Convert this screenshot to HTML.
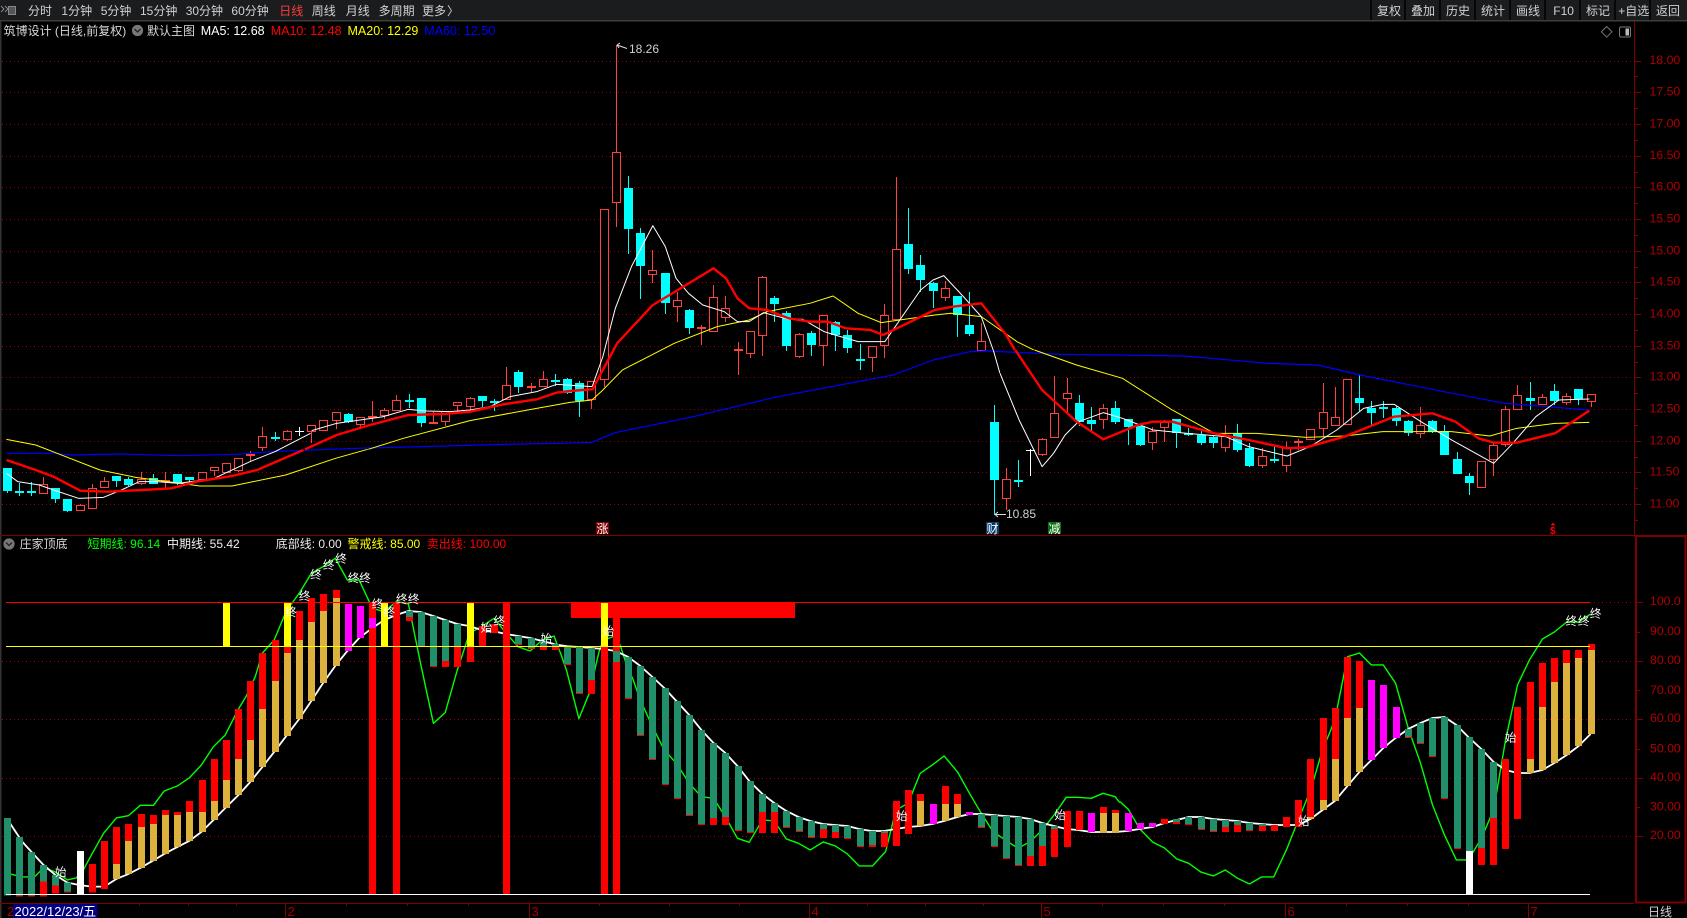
<!DOCTYPE html>
<html lang="zh"><head><meta charset="utf-8"><title>筑博设计</title>
<style>
html,body{margin:0;padding:0;background:#000;width:1687px;height:918px;overflow:hidden}
svg{display:block}
text{font-family:"Liberation Sans","Noto Sans CJK SC",sans-serif;font-size:12px;white-space:pre}
polyline{fill:none;vector-effect:non-scaling-stroke;stroke-linejoin:round}
.m text{fill:#ced2d6}
.ax text{fill:#b00000;font-size:12.3px}
.sg text{fill:#fff;text-anchor:middle;font-size:11.5px}
</style></head><body>
<svg width="1687" height="918" viewBox="0 0 1687 918" xmlns="http://www.w3.org/2000/svg">
<rect width="1687" height="918" fill="#000"/>
<!-- top bar -->
<rect width="1687" height="20" fill="#1b1c1e"/>
<rect y="20" width="1687" height="1.5" fill="#3c3c3c"/>
<rect x="0" y="21" width="1.5" height="897" fill="#333"/>
<path d="M1 6l3 3-3 3M5 6l3 3-3 3" fill="none" stroke="#888"/>
<rect x="8.5" y="6.5" width="7" height="8" fill="#555" stroke="#888"/>
<g class="m">
<text x="28" y="15">分时</text><text x="61.4" y="15">1分钟</text><text x="100.7" y="15">5分钟</text><text x="140" y="15">15分钟</text><text x="185.7" y="15">30分钟</text><text x="231.4" y="15">60分钟</text><text x="279.3" y="15" style="fill:#ff3c3c">日线</text><text x="311.8" y="15">周线</text><text x="345.7" y="15">月线</text><text x="378.6" y="15">多周期</text><text x="422" y="15">更多</text><text x="447" y="15">〉</text>
</g>
<!-- right buttons -->
<path d="M1371 0v20M1405 0v20M1440 0v20M1475 0v20M1510 0v20M1545 0v20M1580 0v20M1615 0v20M1650 0v20" stroke="#000" stroke-width="1.5"/>
<g class="m"><text x="1377" y="15">复权</text><text x="1411" y="15">叠加</text><text x="1446" y="15">历史</text><text x="1481" y="15">统计</text><text x="1516" y="15">画线</text><text x="1553.3" y="15">F10</text><text x="1586" y="15">标记</text><text x="1618.3" y="15">+自选</text><text x="1656" y="15">返回</text></g>
<!-- info row -->
<text x="3.6" y="35" fill="#d8d8d8">筑博设计 (日线,前复权)</text>
<circle cx="137.5" cy="30.5" r="5.6" fill="#777"/><path d="M134.5 29l3 3 3-3" fill="none" stroke="#222" stroke-width="1.3"/>
<text x="147" y="35" fill="#d8d8d8">默认主图</text>
<text x="200.7" y="35" fill="#fff" style="font-size:12.5px">MA5: 12.68</text>
<text x="270.7" y="35" fill="#f00" style="font-size:12.5px">MA10: 12.48</text>
<text x="347.5" y="35" fill="#ff0" style="font-size:12.5px">MA20: 12.29</text>
<text x="424.3" y="35" fill="#00f" style="font-size:12.5px">MA60: 12.50</text>
<path d="M1606.7 26.5l5.3 5.3-5.3 5.3-5.3-5.3z" fill="none" stroke="#777"/>
<rect x="1619.5" y="27" width="11" height="10" rx="1.5" fill="#000" stroke="#777"/><rect x="1625.5" y="28.5" width="3.5" height="7" fill="#bbb"/>
<!-- grid -->
<path d="M2 61.5H1634M2 92.5H1634M2 124.5H1634M2 156.5H1634M2 187.5H1634M2 219.5H1634M2 251.5H1634M2 282.5H1634M2 314.5H1634M2 346.5H1634M2 377.5H1634M2 409.5H1634M2 441.5H1634M2 472.5H1634M2 504.5H1634M2 661.5H1634M2 719.5H1634M2 778.5H1634M2 836.5H1634M1590 602.5H1634" stroke="#990000" stroke-dasharray="1 3"/>
<!-- axes -->
<path d="M1634.5 21V535M0 535.5H1687M0 903.5H1634" stroke="#800000"/>
<rect x="1636" y="536" width="49.5" height="366.5" fill="none" stroke="#800000" stroke-width="2"/>
<path d="M1635 61.5h6M1635 92.5h6M1635 124.5h6M1635 156.5h6M1635 187.5h6M1635 219.5h6M1635 251.5h6M1635 282.5h6M1635 314.5h6M1635 346.5h6M1635 377.5h6M1635 409.5h6M1635 441.5h6M1635 472.5h6M1635 504.5h6M1635 76.5h3M1635 108.5h3M1635 140.5h3M1635 172.5h3M1635 203.5h3M1635 235.5h3M1635 267.5h3M1635 298.5h3M1635 330.5h3M1635 362.5h3M1635 393.5h3M1635 425.5h3M1635 457.5h3M1635 488.5h3M1635 520.5h3M1637 602.5h6M1637 632.5h3M1637 661.5h6M1637 690.5h3M1637 719.5h6M1637 749.5h3M1637 778.5h6M1637 807.5h3M1637 836.5h6" stroke="#800000"/>
<g class="ax">
<text x="1649.5" y="64">18.00</text><text x="1649.5" y="95.5">17.50</text><text x="1649.5" y="127.5">17.00</text><text x="1649.5" y="159">16.50</text><text x="1649.5" y="190.5">16.00</text><text x="1649.5" y="222.5">15.50</text><text x="1649.5" y="254.5">15.00</text><text x="1649.5" y="285.5">14.50</text><text x="1649.5" y="317.5">14.00</text><text x="1649.5" y="349.5">13.50</text><text x="1649.5" y="380.5">13.00</text><text x="1649.5" y="412.5">12.50</text><text x="1649.5" y="444.5">12.00</text><text x="1649.5" y="475.5">11.50</text><text x="1649.5" y="507.5">11.00</text>
<text x="1650" y="605">100.0</text><text x="1650" y="635">90.00</text><text x="1650" y="664">80.00</text><text x="1650" y="694">70.00</text><text x="1650" y="722">60.00</text><text x="1650" y="752.5">50.00</text><text x="1650" y="781">40.00</text><text x="1650" y="810.5">30.00</text><text x="1650" y="839">20.00</text>
</g>
<!-- candle wicks -->
<path fill="none" stroke="#ff4040" d="M43.5 477V493M80.5 504V510M92.5 484V508M104.5 477V488M141.5 472V485M202.5 472V481M214.5 467V476M226.5 463V472M238.5 458V472M262.5 427V451M287.5 430V441M311.5 425V443M323.5 420V430M336.5 412V429M360.5 417V429M384.5 408V419M396.5 395V410M445.5 411V426M457.5 402V414M470.5 397V412M506.5 367V400M543.5 371V387M591.5 381V409M604.5 209V387M616.5 45V227M652.5 250V283M677.5 292V322M713.5 285V331M725.5 296V322M750.5 331V358M762.5 276V356M799.5 333V358M823.5 315V366M872.5 346V372M884.5 304V358M896.5 177V319M945.5 281V301M981.5 323V350M1006.5 468V510M1042.5 438V456M1054.5 376V437M1067.5 378V413M1103.5 404V429M1152.5 427V450M1164.5 420V442M1225.5 425V452M1262.5 448V468M1286.5 442V472M1310.5 429V440M1323.5 383V437M1335.5 387V425M1347.5 379V424M1420.5 407V438M1481.5 461V487M1493.5 443V476M1505.5 406V447M1517.5 385V409M1542.5 394V405M1566.5 393V405M1591.5 394V407M165.5 472V488M250.5 451V461M372.5 401V422M433.5 412V424M531.5 383V392M701.5 325V345M738.5 342V375M1298.5 439V450"/>
<!-- red hollow bodies -->
<path fill="#000" stroke="#ff4040" d="M39.5 484.5h8V493.5h-8zM76.5 505.5h8V510.5h-8zM88.5 488.5h8V508.5h-8zM100.5 481.5h8V487.5h-8zM137.5 479.5h8V483.5h-8zM198.5 472.5h8V479.5h-8zM210.5 467.5h8V470.5h-8zM222.5 463.5h8V472.5h-8zM234.5 458.5h8V470.5h-8zM258.5 436.5h8V447.5h-8zM283.5 431.5h8V439.5h-8zM307.5 425.5h8V431.5h-8zM319.5 420.5h8V430.5h-8zM332.5 412.5h8V420.5h-8zM356.5 417.5h8V424.5h-8zM380.5 410.5h8V415.5h-8zM392.5 400.5h8V410.5h-8zM441.5 411.5h8V421.5h-8zM453.5 402.5h8V405.5h-8zM466.5 398.5h8V406.5h-8zM502.5 385.5h8V399.5h-8zM539.5 379.5h8V386.5h-8zM587.5 381.5h8V399.5h-8zM600.5 209.5h8V379.5h-8zM612.5 152.5h8V202.5h-8zM648.5 270.5h8V274.5h-8zM673.5 300.5h8V306.5h-8zM709.5 297.5h8V331.5h-8zM721.5 308.5h8V317.5h-8zM746.5 331.5h8V353.5h-8zM758.5 277.5h8V335.5h-8zM795.5 334.5h8V356.5h-8zM819.5 315.5h8V345.5h-8zM868.5 346.5h8V357.5h-8zM880.5 315.5h8V345.5h-8zM892.5 249.5h8V319.5h-8zM941.5 288.5h8V297.5h-8zM977.5 341.5h8V350.5h-8zM1002.5 479.5h8V498.5h-8zM1038.5 439.5h8V454.5h-8zM1050.5 413.5h8V437.5h-8zM1063.5 393.5h8V398.5h-8zM1099.5 408.5h8V419.5h-8zM1148.5 431.5h8V442.5h-8zM1160.5 422.5h8V427.5h-8zM1221.5 436.5h8V447.5h-8zM1258.5 456.5h8V465.5h-8zM1282.5 447.5h8V465.5h-8zM1306.5 429.5h8V439.5h-8zM1319.5 412.5h8V428.5h-8zM1331.5 417.5h8V425.5h-8zM1343.5 379.5h8V424.5h-8zM1416.5 425.5h8V433.5h-8zM1477.5 461.5h8V487.5h-8zM1489.5 445.5h8V459.5h-8zM1501.5 409.5h8V444.5h-8zM1513.5 395.5h8V409.5h-8zM1538.5 397.5h8V404.5h-8zM1562.5 396.5h8V402.5h-8zM1587.5 394.5h8V401.5h-8z"/>
<path fill="#ff4040" shape-rendering="crispEdges" d="M161 480h9v2h-9zM246 454h9v2h-9zM368 416h9v2h-9zM429 422h9v2h-9zM527 386h9v2h-9zM697 327h9v2h-9zM734 349h9v2h-9zM1294 441h9v2h-9z"/>
<!-- cyan -->
<path fill="none" stroke="#0ff" d="M7.5 468V493M55.5 488V503M67.5 499V512M116.5 476V487M128.5 477V486M153.5 474V484M177.5 474V485M189.5 477V485M348.5 413V423M421.5 398V427M482.5 396V407M518.5 370V393M567.5 378V394M579.5 381V417M628.5 176V254M640.5 228V299M665.5 273V314M689.5 309V334M774.5 296V322M786.5 311V351M811.5 331V356M835.5 321V351M847.5 330V353M908.5 208V274M920.5 255V292M933.5 282V308M957.5 296V337M969.5 292V336M994.5 405V515M1079.5 395V426M1091.5 407V431M1115.5 401V424M1128.5 419V445M1140.5 426V446M1176.5 419V448M1201.5 431V445M1213.5 436V448M1237.5 424V452M1249.5 443V467M1359.5 375V411M1371.5 401V425M1396.5 406V426M1408.5 420V436M1432.5 420V433M1444.5 425V455M1457.5 452V474M1469.5 473V495M1530.5 382V410M1554.5 384V405M1578.5 389V405M19.5 483V496M31.5 482V496M275.5 432V441M409.5 394V408M494.5 399V411M555.5 374V386M860.5 344V370M1018.5 460V487M1188.5 428V436M1274.5 446V463M1383.5 401V418"/>
<path fill="#0ff" shape-rendering="crispEdges" d="M3 468h9V491h-9zM51 488h9V499h-9zM63 499h9V511h-9zM112 476h9V481h-9zM124 479h9V485h-9zM149 478h9V484h-9zM173 474h9V483h-9zM185 477h9V480h-9zM344 414h9V422h-9zM417 398h9V423h-9zM478 396h9V401h-9zM514 372h9V387h-9zM563 379h9V393h-9zM575 383h9V401h-9zM624 188h9V229h-9zM636 233h9V266h-9zM661 273h9V303h-9zM685 310h9V328h-9zM770 298h9V304h-9zM782 313h9V346h-9zM807 333h9V345h-9zM831 322h9V335h-9zM843 335h9V348h-9zM904 244h9V269h-9zM916 265h9V280h-9zM929 283h9V291h-9zM953 296h9V315h-9zM965 325h9V334h-9zM990 422h9V480h-9zM1075 403h9V422h-9zM1087 420h9V424h-9zM1111 408h9V422h-9zM1124 419h9V427h-9zM1136 426h9V445h-9zM1172 419h9V433h-9zM1197 435h9V443h-9zM1209 437h9V443h-9zM1233 433h9V450h-9zM1245 448h9V466h-9zM1355 398h9V403h-9zM1367 408h9V413h-9zM1392 408h9V421h-9zM1404 421h9V433h-9zM1428 421h9V432h-9zM1440 431h9V455h-9zM1453 459h9V474h-9zM1465 476h9V483h-9zM1526 398h9V401h-9zM1550 391h9V401h-9zM1574 389h9V399h-9zM15 491h9v2h-9zM27 491h9v2h-9zM271 437h9v2h-9zM405 400h9v2h-9zM490 401h9v2h-9zM551 380h9v2h-9zM856 359h9v2h-9zM1014 480h9v2h-9zM1184 433h9v2h-9zM1270 459h9v2h-9zM1379 407h9v2h-9z"/>
<path fill="none" stroke="#fff" d="M299.5 427V436M295 431.5h9M1030.5 449V476M1026 450.5h9"/>
<!-- MA60 -->
<polyline stroke="#00f" stroke-width="1.2" points="6.4,453.3 53.6,453.3 71.4,455 121.4,454 178.6,455.7 235.7,454.3 278.6,451.3 357,448.3 446,446 518,444 560,443.3 591.7,442.3 615,432.7 693,416.7 773,397.7 893,375 933,360 970,351.7 985,351 1060,354.3 1115,355 1184,356 1268,363.3 1318,365 1360,375 1402,383.3 1452,393.3 1505,403.3 1555,407.3 1589,410"/>
<!-- MA20 -->
<g stroke="#ff0" stroke-width="1">
<polyline transform="translate(0,420) scale(.357,.3333)" points="18,58 100,75 160,100 280,150 380,172 470,185 560,198 650,198 800,165 940,115 1030,88"/>
<polyline transform="translate(270,360) scale(.3333)" points="295,268 400,235 600,182 800,145 900,127 966,120 999,90"/>
<polyline transform="translate(560,30) scale(.357,.3333)" points="120,1080 175,1020 320,940 440,890 530,870 580,845 700,820 765,798 835,850 900,878 1050,855 1095,850 1180,860 1280,935 1327,960"/>
<polyline transform="translate(1000,350) scale(.3827,.3333)" points="90,0 200,45 320,85 450,180 560,250 670,250 800,262 900,258 1000,245 1180,245 1280,258 1350,235 1450,220 1540,217"/>
</g>
<!-- MA5 -->
<g stroke="#fff" stroke-width="1">
<polyline transform="translate(0,420) scale(.357,.3333)" points="18,160 50,185 110,195 150,210 220,235 290,232 340,210 390,185 440,185 500,190 600,175 700,125 770,95 870,40"/>
<polyline transform="translate(270,360) scale(.3333)" points="125,212 200,190 270,180 340,170 415,148 470,153 540,155 600,150 660,140 720,110 800,95 860,73 966,80"/>
<polyline transform="translate(560,30) scale(.357,.3333)" points="90,1070 120,980 155,835 200,710 260,587 295,650 325,745 360,790 400,825 460,845 497,875 530,875 570,848 640,868 680,868 740,905 770,915 835,935 910,935 1010,780 1045,750 1075,737 1130,800 1180,860 1215,965 1232,1029"/>
<polyline transform="translate(1000,350) scale(.3827,.3333)" points="0,70 50,210 110,350 140,310 170,255 205,215 270,188 320,205 400,240 490,250 590,260 650,290 750,318 810,290 880,240 950,175 1000,163 1030,163 1100,215 1180,270 1290,340 1340,280 1400,200 1460,150 1540,147"/>
</g>
<!-- MA10 -->
<g stroke="#f00" stroke-width="2.4">
<polyline transform="translate(0,420) scale(.357,.3333)" points="18,120 100,150 150,170 225,212 300,215 400,210 480,205 550,185 650,168 720,150 850,90"/>
<polyline transform="translate(270,360) scale(.3333)" points="105,268 200,225 300,195 415,165 520,162 600,155 700,133 800,118 860,98 900,93 966,88"/>
<polyline transform="translate(560,30) scale(.357,.3333)" points="90,1080 160,940 260,825 330,780 430,715 465,745 497,805 530,835 580,840 640,865 700,875 750,875 800,895 870,900 905,915 1050,840 1100,830 1180,820 1250,915 1274,960"/>
<polyline transform="translate(1000,350) scale(.3827,.3333)" points="40,0 110,120 200,215 270,268 360,225 400,215 450,215 560,250 650,270 750,295 800,292 900,260 1030,200 1130,190 1190,215 1250,265 1290,278 1350,278 1450,250 1540,182"/>
</g>
<!-- high / low labels -->
<path d="M617 45L627 48.5M617 45l3-2M617 45l2 3M995 514.5H1006M995 514.5l3-2.5M995 514.5l3 2.5" fill="none" stroke="#ddd"/>
<text x="629" y="53" fill="#d0d0d0">18.26</text>
<text x="1006" y="518" fill="#d0d0d0">10.85</text>
<!-- markers -->
<rect x="596" y="522" width="13" height="12" fill="#800000"/><text x="596.5" y="533" fill="#fff">涨</text>
<rect x="986" y="522" width="13" height="12" fill="#0a3a6a"/><text x="986.5" y="533" fill="#fff">财</text>
<rect x="1048" y="522" width="13" height="12" fill="#0a6e14"/><text x="1048.5" y="533" fill="#fff">减</text>
<path d="M1553 522.5l2.5 3h-5z" fill="#f00"/><text x="1550" y="534" fill="#f00" style="font-size:10px;font-weight:bold">$</text>
<!-- sub header -->
<circle cx="9" cy="544" r="5.6" fill="#777"/><path d="M6 542.5l3 3 3-3" fill="none" stroke="#222" stroke-width="1.3"/>
<text x="19.6" y="548" fill="#d8d8d8">庄家顶底</text>
<text x="87.5" y="548" fill="#0f0">短期线: 96.14</text>
<text x="167" y="548" fill="#f0f0f0">中期线: 55.42</text>
<text x="275.7" y="548" fill="#e8e8e8">底部线: 0.00</text>
<text x="347.5" y="548" fill="#ff0">警戒线: 85.00</text>
<text x="426.8" y="548" fill="#f00">卖出线: 100.00</text>
<!-- sub lines -->
<g stroke="#0f0" stroke-width="1.4">
<polyline transform="translate(0,530) scale(.357,.3333)" points="28,1032 62,1041 96,1041 122,1014 155,1026 189,1050 213,1044 232,1023 256,975 290,910 326,864 360,857 393,826 430,826 460,783 497,768 530,744 564,705 598,650 631,615 668,537 690,498 715,440 735,369 768,330 802,243 838,190 872,130 905,110 939,85 973,150 1006,150 1043,235 1076,245 1110,215 1144,222 1178,400 1214,580 1247,548 1281,420 1315,310 1348,290 1384,265 1418,310 1451,350 1485,363 1519,330 1552,318 1568,365"/>
<polyline transform="translate(560,530) scale(.357,.3333)" points="0,365 18,420 53,566 82,490 110,362 122,330 155,318 170,350 185,400 205,450 225,510 259,590 292,660 326,700 362,760 396,800 430,805 463,860 497,925 530,937 567,870 600,873 634,927 668,940 701,960 737,936 771,948 805,972 838,1008 875,1008 912,965 941,840 975,820 1009,730 1043,705 1076,678 1113,725 1147,790 1180,850 1213,905 1247,930 1283,955 1317,935 1351,900 1384,855 1418,802 1451,802 1488,805 1521,790 1555,800 1568,818"/>
<polyline transform="translate(1120,530) scale(.3617,.3333)" points="0,815 23,838 55,897 90,936 123,954 157,987 190,1000 223,1026 258,1038 291,1020 325,1045 358,1062 391,1041 425,1041 460,960 493,870 527,780 560,660 594,570 629,380 662,369 695,405 728,405 762,460 797,595 831,700 864,825 897,915 930,990 963,990 999,925 1033,840 1066,630 1099,465 1132,390 1168,327 1201,306 1235,276 1268,276 1301,252"/>
</g>
<g stroke="#fff" stroke-width="1.8">
<polyline transform="translate(0,530) scale(.357,.3333)" points="28,880 62,935 96,975 122,1005 155,1035 189,1058 222,1065 256,1070 292,1070 326,1047 360,1032 393,1014 427,993 460,972 497,951 530,933 564,906 598,870 631,834 668,795 701,756 735,711 768,666 802,618 838,567 872,513 905,459 939,408 973,363 1006,324 1043,294 1076,270 1110,255 1144,243 1178,246 1214,258 1247,270 1281,282 1315,288 1348,300 1384,304 1418,312 1451,318 1485,324 1519,333 1552,342"/>
<polyline transform="translate(560,530) scale(.357,.3333)" points="-23,342 21,349 55,351 88,354 122,357 155,363 191,381 225,408 259,441 292,474 326,513 362,555 396,600 430,639 463,669 497,708 530,753 567,792 600,819 634,843 668,861 701,873 737,882 771,885 805,888 838,897 872,903 908,903 941,897 975,891 1009,888 1043,882 1076,873 1113,861 1147,852 1180,852 1213,855 1247,858 1283,861 1317,867 1351,879 1384,888 1418,897 1451,900 1488,906 1521,906 1555,906"/>
<polyline transform="translate(1120,530) scale(.3617,.3333)" points="-14,906 20,903 54,897 90,891 123,879 157,870 190,861 223,861 258,867 291,870 325,873 358,879 391,882 425,885 460,885 493,885 527,867 560,840 594,813 629,768 662,726 695,690 728,654 762,624 797,597 831,579 864,564 897,561 930,585 963,621 999,657 1033,696 1066,720 1099,729 1132,729 1168,720 1201,699 1235,675 1268,648 1301,612"/>
</g>
<!-- sub bars -->
<g transform="translate(0,530) scale(1,.33333)" shape-rendering="crispEdges">
<path fill="#228f6b" d="M4 864h7V1097h-7zM16 921h7V1097h-7zM28 966h7V1097h-7zM40 1005h7V1055h-7zM52 1035h7V1067h-7zM64 1058h7V1085h-7zM406 243h7V261h-7zM418 246h7V349h-7zM430 258h7V408h-7zM442 270h7V393h-7zM454 282h7V349h-7zM515 318h7V342h-7zM528 324h7V354h-7zM540 333h7V348h-7zM552 342h7V348h-7zM564 349h7V402h-7zM576 350h7V489h-7zM588 354h7V450h-7zM613 363h7V396h-7zM625 381h7V504h-7zM637 408h7V615h-7zM649 441h7V687h-7zM662 474h7V762h-7zM674 513h7V804h-7zM686 555h7V855h-7zM698 600h7V882h-7zM710 639h7V864h-7zM722 669h7V861h-7zM735 708h7V900h-7zM747 753h7V906h-7zM759 792h7V846h-7zM771 819h7V846h-7zM783 843h7V891h-7zM796 861h7V903h-7zM808 873h7V921h-7zM820 882h7V897h-7zM832 885h7V906h-7zM844 888h7V924h-7zM857 897h7V948h-7zM869 903h7V945h-7zM881 903h7V909h-7zM978 852h7V891h-7zM991 855h7V948h-7zM1003 858h7V984h-7zM1015 861h7V1005h-7zM1027 867h7V978h-7zM1039 879h7V948h-7zM1051 888h7V897h-7zM1173 867h7V876h-7zM1185 861h7V882h-7zM1198 861h7V897h-7zM1210 867h7V903h-7zM1222 870h7V891h-7zM1234 873h7V885h-7zM1246 879h7V900h-7zM1259 882h7V888h-7zM1405 597h7V621h-7zM1417 579h7V639h-7zM1429 564h7V678h-7zM1441 561h7V804h-7zM1454 585h7V954h-7zM1466 621h7V963h-7zM1478 657h7V954h-7zM1490 696h7V864h-7z"/>
<path fill="#f00" d="M571 217H795V264H571zM16 1097h7V1100h-7zM28 1097h7V1100h-7zM40 1055h7V1100h-7zM52 1067h7V1091h-7zM64 1085h7V1088h-7zM89 1002h7V1088h-7zM101 933h7V1077h-7zM113 891h7V1002h-7zM125 882h7V933h-7zM138 852h7V891h-7zM150 855h7V882h-7zM162 840h7V855h-7zM174 846h7V855h-7zM186 813h7V846h-7zM199 750h7V846h-7zM211 687h7V813h-7zM223 630h7V750h-7zM235 537h7V687h-7zM247 453h7V630h-7zM259 369h7V537h-7zM272 330h7V453h-7zM284 349h7V369h-7zM296 243h7V330h-7zM308 204h7V276h-7zM320 192h7V243h-7zM333 180h7V204h-7zM369 219h7V1092h-7zM393 219h7V1092h-7zM406 261h7V273h-7zM430 408h7V411h-7zM442 393h7V411h-7zM454 349h7V411h-7zM467 349h7V396h-7zM479 288h7V348h-7zM491 282h7V309h-7zM503 219h7V1092h-7zM515 342h7V345h-7zM528 354h7V357h-7zM540 348h7V360h-7zM552 348h7V360h-7zM564 402h7V405h-7zM576 489h7V492h-7zM588 450h7V492h-7zM601 350h7V1092h-7zM613 264h7V363h-7zM613 396h7V1092h-7zM625 504h7V507h-7zM637 615h7V618h-7zM649 687h7V690h-7zM662 762h7V765h-7zM674 804h7V807h-7zM686 855h7V858h-7zM698 882h7V885h-7zM710 864h7V885h-7zM722 861h7V885h-7zM735 900h7V903h-7zM747 906h7V909h-7zM759 846h7V909h-7zM771 846h7V909h-7zM783 891h7V894h-7zM796 903h7V906h-7zM808 921h7V924h-7zM820 897h7V924h-7zM832 906h7V924h-7zM844 924h7V927h-7zM857 948h7V951h-7zM869 945h7V951h-7zM881 909h7V951h-7zM893 813h7V948h-7zM905 780h7V912h-7zM917 792h7V813h-7zM942 768h7V822h-7zM954 792h7V822h-7zM978 891h7V894h-7zM991 948h7V951h-7zM1003 984h7V987h-7zM1015 1005h7V1008h-7zM1027 978h7V1008h-7zM1039 948h7V1008h-7zM1051 897h7V981h-7zM1064 843h7V951h-7zM1076 843h7V900h-7zM1100 831h7V849h-7zM1112 840h7V849h-7zM1161 867h7V882h-7zM1173 876h7V882h-7zM1185 882h7V885h-7zM1198 897h7V900h-7zM1210 903h7V906h-7zM1222 891h7V906h-7zM1234 885h7V906h-7zM1246 900h7V903h-7zM1259 888h7V903h-7zM1271 885h7V903h-7zM1283 861h7V891h-7zM1295 810h7V891h-7zM1307 687h7V861h-7zM1320 564h7V810h-7zM1332 534h7V687h-7zM1344 381h7V564h-7zM1356 393h7V534h-7zM1405 621h7V624h-7zM1417 639h7V642h-7zM1429 678h7V681h-7zM1441 804h7V807h-7zM1454 954h7V957h-7zM1478 954h7V1005h-7zM1490 864h7V1005h-7zM1502 687h7V957h-7zM1514 531h7V867h-7zM1527 456h7V687h-7zM1539 399h7V531h-7zM1551 384h7V456h-7zM1563 360h7V399h-7zM1575 360h7V384h-7zM1588 342h7V360h-7z"/>
<path fill="#ddb13e" d="M113 1002h7V1047h-7zM125 933h7V1032h-7zM138 891h7V1014h-7zM150 882h7V993h-7zM162 855h7V972h-7zM174 855h7V951h-7zM186 846h7V933h-7zM199 846h7V906h-7zM211 813h7V870h-7zM223 750h7V834h-7zM235 687h7V795h-7zM247 630h7V756h-7zM259 537h7V711h-7zM272 453h7V666h-7zM284 369h7V618h-7zM296 330h7V567h-7zM308 276h7V513h-7zM320 243h7V459h-7zM333 204h7V408h-7zM917 813h7V888h-7zM942 822h7V873h-7zM954 822h7V861h-7zM1100 849h7V909h-7zM1112 849h7V909h-7zM1307 861h7V867h-7zM1320 810h7V840h-7zM1332 687h7V813h-7zM1344 564h7V768h-7zM1356 534h7V726h-7zM1527 687h7V729h-7zM1539 531h7V720h-7zM1551 456h7V699h-7zM1563 399h7V675h-7zM1575 384h7V648h-7zM1588 360h7V612h-7z"/>
<path fill="#f0f" d="M345 222h7V363h-7zM357 228h7V324h-7zM369 264h7V294h-7zM930 822h7V882h-7zM966 846h7V855h-7zM1088 849h7V906h-7zM1125 849h7V903h-7zM1137 879h7V897h-7zM1149 879h7V891h-7zM1368 450h7V690h-7zM1380 465h7V654h-7zM1393 531h7V624h-7z"/>
<path fill="#ff0" d="M223 219h7V349h-7zM284 219h7V349h-7zM381 219h7V349h-7zM467 219h7V349h-7zM601 219h7V350h-7z"/>
<path fill="#fff" d="M77 963h7V1093h-7zM1466 963h7V1092h-7z"/>
</g>
<!-- horizontal signal lines -->
<path d="M6 602.5H1590" stroke="#f00"/>
<path d="M6 646.5H1590" stroke="#ff0"/>
<path d="M6 894.5H1590" stroke="#fff"/>
<!-- signals -->
<g class="sg">
<text x="291" y="616">终</text><text x="304.6" y="600">终</text><text x="316" y="578.5">终</text><text x="328.6" y="569">终</text><text x="341" y="562.5">终</text><text x="353.6" y="582">终</text><text x="365" y="582">终</text><text x="377.5" y="608">终</text><text x="389.3" y="616">终</text><text x="401.8" y="603">终</text><text x="413.6" y="603">终</text><text x="499.3" y="625">终</text><text x="1571.4" y="625">终</text><text x="1583.6" y="625">终</text><text x="1595.6" y="617.5">终</text>
<text x="60.7" y="876">始</text><text x="486.4" y="631.5">始</text><text x="546.4" y="642.5">始</text><text x="608.2" y="635">始</text><text x="901.8" y="820">始</text><text x="1060" y="819">始</text><text x="1303.7" y="825">始</text><text x="1510.6" y="741.5">始</text>
</g>
<!-- date axis -->
<path d="M139.5 903v3M188.5 903v3M236.5 903v3M346.5 903v3M407.5 903v3M468.5 903v3M599.5 903v3M669.5 903v3M739.5 903v3M867.5 903v3M925.5 903v3M983.5 903v3M1102.5 903v3M1163.5 903v3M1224.5 903v3M1346.5 903v3M1407.5 903v3M1468.5 903v3M285.5 903V918M529.5 903V918M809.5 903V918M1041.5 903V918M1285.5 903V918M1528.5 903V918" stroke="#800000"/>
<rect x="13" y="904" width="84.5" height="14" fill="#000080"/>
<text x="14.5" y="916" fill="#fff" style="font-size:13px">2022/12/23/五</text>
<text x="7" y="916" style="font-size:13px" fill="#a00000">2</text><text x="287.5" y="916" style="font-size:13px" fill="#a00000">2</text><text x="531.5" y="916" style="font-size:13px" fill="#a00000">3</text><text x="811.5" y="916" style="font-size:13px" fill="#a00000">4</text><text x="1043.5" y="916" style="font-size:13px" fill="#a00000">5</text><text x="1287.5" y="916" style="font-size:13px" fill="#a00000">6</text><text x="1530.5" y="916" style="font-size:13px" fill="#a00000">7</text>
<text x="1648" y="916" fill="#ced2d6">日线</text>
</svg>
</body></html>
